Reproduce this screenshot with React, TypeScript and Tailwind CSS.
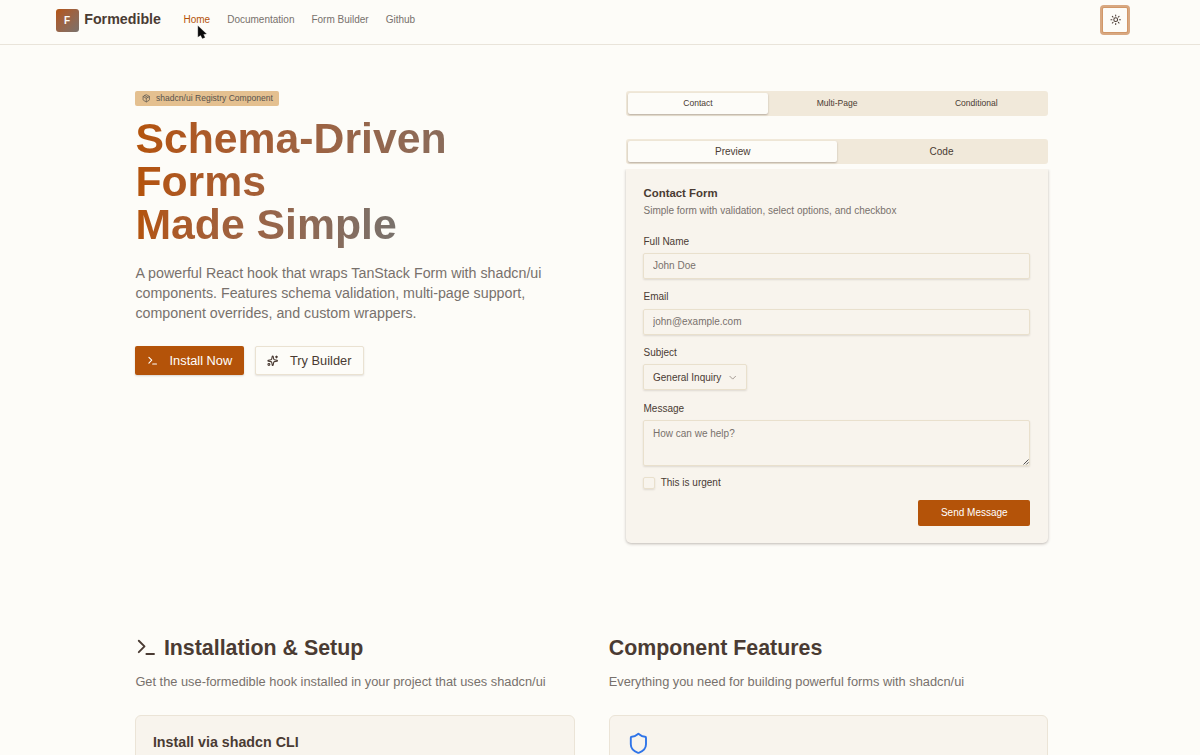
import { useState } from "react";
import type { ReactNode } from "react";
import { ChevronDown, Package, Shield, Sparkles, Sun, Terminal } from "lucide-react";
import clsx from "clsx";

const NAV_ITEMS = ["Home", "Documentation", "Form Builder", "Github"];
const DEMOS = ["Contact", "Multi-Page", "Conditional"];
const VIEWS = ["Preview", "Code"];

const fieldClass =
  "block w-full rounded-[2px] border border-[#e9e0cd] bg-transparent px-[8.5px] text-[10px] text-[#4a3b33] shadow-[0_1px_2px_rgba(74,59,51,0.14)] outline-none placeholder:text-[#78716c]";

function Header() {
  return (
    <header className="flex h-[44.5px] items-start justify-between border-b border-[#e9e4da] pl-[55.5px] pr-[72px]">
      <div className="flex h-10 items-center">
        <div className="flex items-center gap-[5.7px]">
          <div className="flex size-[23px] items-center justify-center rounded-[3px] bg-gradient-to-br from-[#b45309] to-[#78716c] text-[10px] font-bold text-[#fdfcf8]">
            F
          </div>
          <span className="text-[14.25px] font-bold">Formedible</span>
        </div>
        <nav className="ml-[22.5px] flex items-center gap-[17px] pb-px text-[10px]">
          {NAV_ITEMS.map((item) => (
            <a
              key={item}
              href="#"
              className={item === "Home" ? "text-[#b45309]" : "text-[#78716c]"}
            >
              {item}
            </a>
          ))}
        </nav>
      </div>
      <div className="flex h-10 items-center">
        <button
          aria-label="Toggle theme"
          className="flex size-[25.6px] items-center justify-center rounded-[2px] border border-[#b45309]/60 bg-[#fdfcf8] ring-2 ring-[#b45309]/50"
        >
          <Sun className="size-[11.4px]" strokeWidth={2.2} />
        </button>
      </div>
    </header>
  );
}

function Tabs({
  items,
  value,
  onChange,
  className,
}: {
  items: string[];
  value: string;
  onChange: (item: string) => void;
  className?: string;
}) {
  return (
    <div
      role="tablist"
      className={clsx("flex h-[25.6px] rounded-[3px] bg-[#f1e9da] p-[2px]", className)}
    >
      {items.map((item) => (
        <button
          key={item}
          role="tab"
          aria-selected={item === value}
          onClick={() => onChange(item)}
          className={clsx(
            "flex flex-1 items-center justify-center rounded-[2px]",
            item === value && "bg-[#fdfcf8] shadow-[0_1px_2px_rgba(74,59,51,0.35)]"
          )}
        >
          {item}
        </button>
      ))}
    </div>
  );
}

function Field({ label, children }: { label: string; children: ReactNode }) {
  return (
    <div>
      <label className="mb-[6.2px] block text-[10px] leading-[10px]">{label}</label>
      {children}
    </div>
  );
}

function ContactForm() {
  return (
    <div className="mt-[5px] overflow-hidden px-[3px] pb-1 -mx-[3px]">
      <div className="h-[374px] rounded-b-[5px] bg-[#f8f4ed] pl-[17.1px] pr-[17.6px] pt-[16.5px] shadow-[0_1px_3px_rgba(74,59,51,0.35)]">
        <h3 className="text-[11.4px] font-bold leading-[14px]">Contact Form</h3>
        <p className="mt-[4px] text-[10px] leading-[14.25px] text-[#78716c]">
          Simple form with validation, select options, and checkbox
        </p>
        <form className="mt-[18.5px]" onSubmit={(e) => e.preventDefault()}>
          <div className="flex flex-col gap-[13.5px]">
            <Field label="Full Name">
              <input className={clsx(fieldClass, "h-[26px]")} placeholder="John Doe" />
            </Field>
            <Field label="Email">
              <input className={clsx(fieldClass, "h-[26px]")} placeholder="john@example.com" />
            </Field>
            <Field label="Subject">
              <button
                type="button"
                className="flex h-[26px] w-[104px] items-center gap-[5.7px] rounded-[2px] border border-[#e9e0cd] px-[8.5px] text-[10px] shadow-[0_1px_2px_rgba(74,59,51,0.14)]"
              >
                <span className="whitespace-nowrap">General Inquiry</span>
                <ChevronDown className="size-[11.4px] shrink-0 opacity-50" />
              </button>
            </Field>
            <Field label="Message">
              <div className="relative">
                <textarea
                  className={clsx(fieldClass, "h-[46px] resize-none py-[6px] leading-[14.25px]")}
                  placeholder="How can we help?"
                />
                <svg
                  className="absolute bottom-[1px] right-[1px] size-[6px]"
                  viewBox="0 0 6 6"
                  stroke="#3f3f3f"
                  strokeWidth="0.9"
                >
                  <path d="M0.5 5.5L5.5 0.5M3.3 5.5L5.5 3.3" />
                </svg>
              </div>
            </Field>
          </div>
          <div className="mt-[10px] flex items-center gap-[5.7px]">
            <span className="size-[11.5px] rounded-[2px] border border-[#e9e0cd] shadow-[0_1px_2px_rgba(74,59,51,0.14)]" />
            <span className="text-[10px] leading-[14px]">This is urgent</span>
          </div>
          <div className="mt-[10px] flex justify-end">
            <button className="h-[25.6px] w-[112px] rounded-[2px] bg-[#b45309] text-[10px] text-white">
              Send Message
            </button>
          </div>
        </form>
      </div>
    </div>
  );
}

function Hero() {
  const [demo, setDemo] = useState("Contact");
  const [view, setView] = useState("Preview");

  return (
    <section className="flex h-[589px] justify-between pt-[46px]">
      <div className="w-[421.5px]">
        <div className="flex h-[15.5px] w-[144px] items-center gap-[5.7px] rounded-[2px] bg-[#e4c090] px-[6.4px] text-[8.55px] text-[#57534e]">
          <Package className="size-[8.55px] shrink-0" />
          <span className="whitespace-nowrap">shadcn/ui Registry Component</span>
        </div>
        <h1 className="mt-[11.4px] text-[42.75px] font-bold leading-[42.75px] text-transparent">
          <span className="block bg-gradient-to-r from-[#b45309] to-[#78716c] bg-clip-text">
            Schema-Driven
            <br />
            Forms
          </span>
          {/* padding keeps the descender inside the clipped gradient */}
          <span className="block w-fit bg-gradient-to-r from-[#b45309] to-[#78716c] bg-clip-text pb-[4px]">
            Made Simple
          </span>
        </h1>
        <p className="mt-[13px] text-[14.25px] leading-[20px] text-[#78716c]">
          A powerful React hook that wraps TanStack Form with shadcn/ui components. Features schema
          validation, multi-page support, component overrides, and custom wrappers.
        </p>
        <div className="mt-[23.6px] flex gap-[11.4px] text-[12.825px]">
          <button className="flex h-[28.5px] items-center gap-[11.4px] rounded-[2px] bg-[#b45309] px-[11.4px] text-white shadow-[0_1px_2px_rgba(74,59,51,0.2)]">
            <Terminal className="size-[11.4px]" strokeWidth={2.3} />
            Install Now
          </button>
          <button className="flex h-[28.5px] items-center gap-[11.4px] rounded-[2px] border border-[#eae2d2] bg-[#fdfcf8] px-[11.2px] shadow-[0_1px_2px_rgba(74,59,51,0.14)]">
            <Sparkles className="size-[11.4px]" strokeWidth={2.3} />
            Try Builder
          </button>
        </div>
      </div>

      <div className="w-[421.5px]">
        <Tabs items={DEMOS} value={demo} onChange={setDemo} className="text-[8.55px]" />
        <Tabs
          items={VIEWS}
          value={view}
          onChange={setView}
          className="mt-[22.8px] text-[10px]"
        />
        <ContactForm />
      </div>
    </section>
  );
}

function Overview() {
  return (
    <section className="grid grid-cols-2 gap-[34.2px]">
      <div>
        <h2 className="flex items-center gap-[5.7px] text-[21.375px] font-bold leading-[28px]">
          <Terminal className="size-[22.8px]" />
          Installation &amp; Setup
        </h2>
        <p className="mt-[10.4px] text-[12.825px] leading-[20px] text-[#78716c]">
          Get the use-formedible hook installed in your project that uses shadcn/ui
        </p>
        <div className="mt-[23.1px] h-[200px] rounded-[6px] border border-[#ebe4d7] bg-[#f8f4ed] px-[16.5px] pt-[16.3px]">
          <h3 className="text-[14.25px] font-bold leading-[20px]">Install via shadcn CLI</h3>
        </div>
      </div>
      <div>
        <h2 className="text-[21.375px] font-bold leading-[28px]">Component Features</h2>
        <p className="mt-[10.4px] text-[12.825px] leading-[20px] text-[#78716c]">
          Everything you need for building powerful forms with shadcn/ui
        </p>
        <div className="mt-[23.1px] h-[200px] rounded-[6px] border border-[#ebe4d7] bg-[#f8f4ed] px-[17px] pt-[16.5px]">
          <Shield className="size-[22.8px] text-[#2f74e8]" />
        </div>
      </div>
    </section>
  );
}

function Cursor() {
  return (
    <svg
      className="pointer-events-none absolute left-[196px] top-[24px] h-[16px] w-[12px]"
      viewBox="0 0 12 16"
    >
      <path
        d="M1.8 1.5V13.2L4.6 11.4L6.3 14.8L9.2 13.6L7.7 10.5L10.8 10Z"
        fill="#0a0a0a"
        stroke="#fff"
        strokeOpacity="0.6"
        strokeWidth="0.4"
      />
    </svg>
  );
}

export default function App() {
  return (
    <div className="relative h-[755px] overflow-hidden bg-[#fdfcf8] font-['Liberation_Sans',sans-serif] text-[#4a3b33]">
      <Header />
      <main className="ml-[135.4px] w-[912.5px]">
        <Hero />
        <Overview />
      </main>
      <Cursor />
    </div>
  );
}
